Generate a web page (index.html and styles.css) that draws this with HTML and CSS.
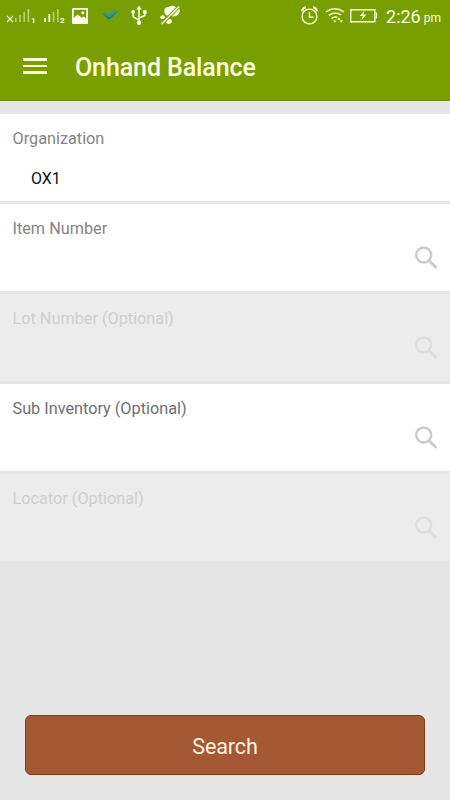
FILE: index.html
```html
<!DOCTYPE html>
<html lang="en">
<head>
    <meta charset="UTF-8">
    <meta name="viewport" content="width=device-width, initial-scale=1.0">
    <title>Onhand Balance</title>
    <link rel="stylesheet" href="styles.css">
</head>
<body>
    <header>
      <div class="statusbar">
        <div class="notifications">
          <svg width="25" height="32" viewBox="0 0 25 32">
            <path d="M1 16l6 6M7 16l-6 6" stroke="#fffde0" stroke-width="1.2"/>
            <path d="M9.8 22v-4M14 22v-7M18.2 22v-10M22.4 22v-13" stroke="#fffde0" stroke-opacity=".5" stroke-width="1.6"/>
          </svg>
          <span class="sim">1</span>
          <svg class="signal2" width="16" height="32" viewBox="0 0 16 32">
            <path d="M1 22v-4M5.3 22v-8" stroke="#fffde0" stroke-width="1.8"/>
            <path d="M9.6 22v-10M13.9 22v-13" stroke="#fffde0" stroke-opacity=".5" stroke-width="1.6"/>
          </svg>
          <span class="sim">2</span>
          <svg class="picture" width="16" height="32" viewBox="0 0 16 32">
            <path fill="#fffef0" d="M1.2 8h13.6q1.2 0 1.2 1.2v13.6q0 1.2-1.2 1.2H1.2Q0 24 0 22.8V9.2Q0 8 1.2 8z"/>
            <path fill="#789f00" d="M1.8 9.8h12.4v8.700l-2.200-2-2.200 1.200-4.200-3.200-3.800 3.500z"/>
            <circle cx="10.800" cy="12.800" r="1.500" fill="#fffef0"/>
          </svg>
          <svg class="check" width="16" height="32" viewBox="0 0 16 32">
            <path fill="#2f9694" d="M.5 13.800l2.500-2.300 4 3.500 6.500-5.200 2.300 1.700-8.600 8.300z"/>
            <path fill="#1c707b" d="M.5 13.800l6.700 4 8.600-6.300-8.600 8.300z"/>
          </svg>
          <svg class="usb" width="16" height="32" viewBox="0 0 16 32">
            <path d="M8 22V8M8 20L2.200 16.800V12M8 18l5.800-2.500V12" fill="none" stroke="#fffef0" stroke-width="1.500"/>
            <path d="M5.300 9.500L8 5.500l2.700 4z" fill="#fffef0"/>
            <circle cx="8" cy="22.700" r="2.200" fill="#fffef0"/>
            <circle cx="2.200" cy="12" r="1.900" fill="#fffef0"/>
            <path d="M12.200 10.200h3.400v3.500h-3.400z" fill="#fffef0"/>
          </svg>
          <svg class="muted" width="20" height="32" viewBox="0 0 20 32">
            <g fill="#fffef0">
              <path d="M4.500 12c-.8-3 1.200-5.500 4.200-5C11 5 14.500 5.500 15.500 7 19 6.500 20.500 9.500 19.300 12.500c-1 3.500-5.500 4.700-8.300 3.500C7.500 16.500 4.700 15 4.500 12z"/>
              <ellipse cx="2.600" cy="17.200" rx="2.300" ry="1.900"/>
              <ellipse cx="8.800" cy="21.300" rx="3" ry="2.600"/>
              <circle cx="2" cy="22.800" r="1.300"/>
            </g>
            <path d="M1.500 24.200L19.200 6.500" stroke="#789f00" stroke-width="3.400"/>
            <path d="M1.500 24.200L19.200 6.500" stroke="#fffef0" stroke-width="1.400"/>
          </svg>
        </div>
        <div class="system">
          <svg width="18" height="32" viewBox="0 0 18 32">
            <g fill="none" stroke="#fffde0" stroke-width="1.400">
              <circle cx="8.500" cy="16.500" r="7.400"/>
              <path d="M8.500 12v5.200h4"/>
              <path d="M1 11.300Q1.500 8 5 7.300M16 11.300Q15.500 8 12 7.300" stroke-width="2"/>
            </g>
          </svg>
          <svg class="wifi" width="20" height="32" viewBox="0 0 20 32">
            <g fill="none" stroke="#fffde0" stroke-width="1.500">
              <path d="M.8 12Q9.800 5.500 19 12M3.800 15.300Q9.800 10.700 16.200 15M6.500 18.600Q9.500 16 12.500 17.500"/>
            </g>
            <path fill="#fffde0" d="M8 20.500h3.500L10 22.500zM12.300 20l1.700-2.500 1.700 2.500zM14.500 20.500h3.500l-1.700 2.300z"/>
          </svg>
          <svg class="battery" width="28" height="32" viewBox="0 0 28 32">
            <path d="M.7 9.700h24.100v12.100H.7z" fill="none" stroke="#fffde0" stroke-width="1.400"/>
            <path d="M25.500 13h1v5h-1" fill="none" stroke="#fffde0" stroke-width="1.200"/>
            <path d="M14.500 10.500L9.800 16h3l-1.500 4.500 5.200-6h-3.200z" fill="#fffef0"/>
          </svg>
          <span class="time">2:26</span>
          <span class="ampm">pm</span>
        </div>
      </div>
      <div class="titlebar">
        <div class="menu"><span></span><span></span><span></span></div>
        <h1>Onhand Balance</h1>
      </div>
    </header>

    <form id="balanceForm">
      <div class="field">
        <label>Organization</label>
        <span class="value">OX1</span>
      </div>
      <div class="field">
        <label>Item Number</label>
        <svg class="lookup" width="23" height="24" viewBox="0 0 23 24"><circle cx="8.700" cy="9" r="7.500"/><path d="M14.500 15l6 6"/></svg>
      </div>
      <div class="field disabled">
        <label>Lot Number (Optional)</label>
        <svg class="lookup" width="23" height="24" viewBox="0 0 23 24"><circle cx="8.700" cy="9" r="7.500"/><path d="M14.500 15l6 6"/></svg>
      </div>
      <div class="field">
        <label class="dark">Sub Inventory (Optional)</label>
        <svg class="lookup" width="23" height="24" viewBox="0 0 23 24"><circle cx="8.700" cy="9" r="7.500"/><path d="M14.500 15l6 6"/></svg>
      </div>
      <div class="field disabled">
        <label>Locator (Optional)</label>
        <svg class="lookup" width="23" height="24" viewBox="0 0 23 24"><circle cx="8.700" cy="9" r="7.500"/><path d="M14.500 15l6 6"/></svg>
      </div>
      <button type="submit">Search</button>
    </form>
</body>
</html>
```
FILE: styles.css
```css
* {
  box-sizing: border-box;
}

body {
  margin: 0;
  height: 800px;
  display: flex;
  flex-direction: column;
  background-color: #e6e6e6;
  font-family: Roboto, sans-serif;
}

svg {
  display: block;
  flex-shrink: 0;
}

/* Green header with status icons and title */
header {
  height: 101px;
  background-color: #789f00;
  border-bottom: 1px solid #6f9300;
}

.statusbar {
  height: 32px;
  padding: 0 9px 0 6px;
  display: flex;
  justify-content: space-between;
  color: #fffde0;
}

.notifications, .system {
  display: flex;
}

.sim {
  width: 5px;
  padding-top: 16px;
  font-size: 8px;
  line-height: 9px;
  font-weight: bold;
}

.signal2 {
  margin-left: 8px;
}

.picture {
  margin-left: 7px;
}

.check {
  margin-left: 14px;
}

.usb {
  margin-left: 13px;
}

.muted {
  margin-left: 13px;
}

.wifi {
  margin-left: 6px;
}

.battery {
  margin-left: 5px;
}

.time {
  margin-left: 8px;
  font-size: 18px;
  line-height: 33px;
}

.ampm {
  margin-left: 3px;
  font-size: 12px;
  line-height: 37px;
}

.titlebar {
  height: 68px;
  padding-left: 23px;
  display: flex;
  align-items: center;
}

.menu {
  width: 24px;
  display: flex;
  flex-direction: column;
  gap: 4px;
}

.menu span {
  height: 2.5px;
  background-color: #fffddc;
}

h1 {
  margin: 2px 0 0 28px;
  font-size: 25px;
  font-weight: 500;
  letter-spacing: -0.1px;
  color: #fffde0;
}

/* Field rows */
form {
  flex: 1;
  padding: 13px 0 25px;
  display: flex;
  flex-direction: column;
  gap: 3px;
}

.field {
  height: 87px;
  padding: 15px 12px 0 12.5px;
  display: flex;
  flex-direction: column;
  background-color: #fff;
}

label {
  font-size: 16.25px;
  line-height: 20px;
  color: #858585;
}

label.dark {
  color: #707070;
}

.value {
  margin: 20px 0 0 18.5px;
  font-size: 16px;
  line-height: 20px;
  color: #111;
}

.lookup {
  align-self: flex-end;
  margin-top: 7px;
  fill: none;
  stroke: #cbcbcb;
  stroke-width: 2.4;
}

.lookup path {
  stroke-width: 3;
  stroke-linecap: round;
}

/* Fields that can't be used yet */
.disabled {
  background-color: #ececec;
}

.disabled label {
  color: #cfcfcf;
}

.disabled .lookup {
  stroke: #dedede;
}

button {
  height: 60px;
  margin: auto 25px 0;
  padding: 2px 0 0;
  border: 1px solid #7d3c16;
  border-radius: 6px;
  background-color: #a45833;
  color: #fff3e0;
  font-family: inherit;
  font-size: 21.5px;
  letter-spacing: -0.1px;
}
```
